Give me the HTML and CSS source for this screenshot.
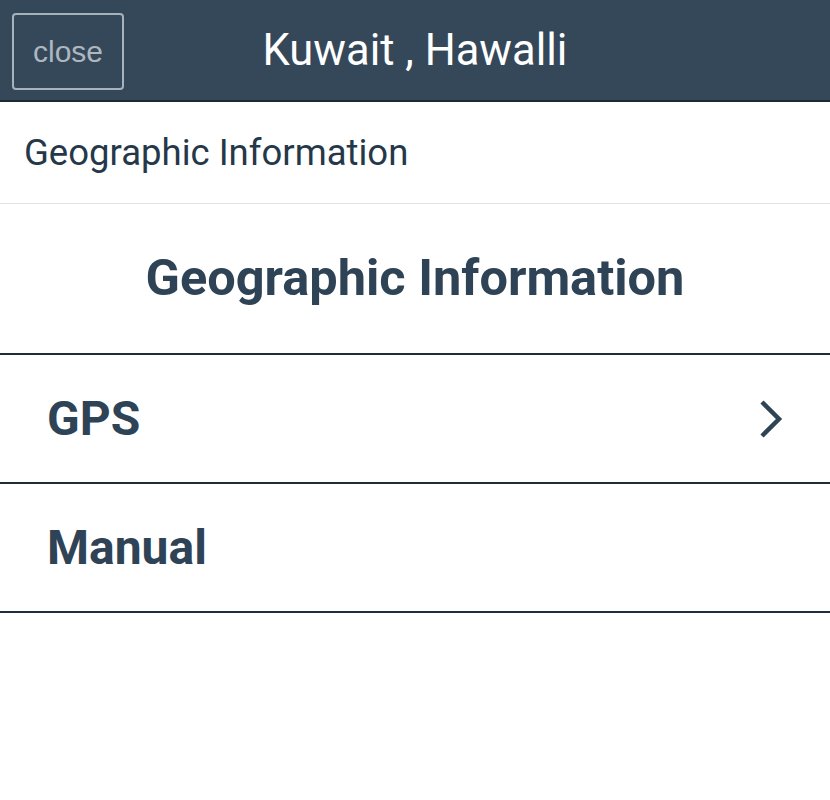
FILE: index.html
```html
<!DOCTYPE html>
<html>
<head>
<meta charset="utf-8">
<link rel="stylesheet" href="styles.css">
</head>
<body>
<header class="topbar">
  <button class="close-btn">close</button>
  <div class="title">Kuwait , Hawalli</div>
</header>
<div class="subbar">Geographic Information</div>
<h1 class="heading">Geographic Information</h1>
<ul class="list">
  <li class="item"><span>GPS</span>
    <svg class="chev" width="30" height="44" viewBox="0 0 30 44"><path d="M6 5 L23 22 L6 39" fill="none" stroke="#2f4356" stroke-width="4.5" stroke-linecap="butt"/></svg>
  </li>
  <li class="item"><span>Manual</span></li>
</ul>
</body>
</html>
```
FILE: styles.css
```css
* { box-sizing: border-box; }
body { margin: 0; font-family: Roboto, "Noto Sans", sans-serif; background: #fff; color: #2f4356; }
.topbar { height: 102px; background: #34485a; border-bottom: 2px solid #1d2a36; display: flex; align-items: center; position: relative; }
.close-btn { position: absolute; left: 12px; top: 13px; width: 112px; height: 77px; background: transparent; border: 2px solid #a8b2bb; border-radius: 4px; color: #aeb7bf; font-family: "Liberation Sans", Arial, sans-serif; font-size: 30px; padding: 0; }
.title { flex: 1; text-align: center; color: #fff; font-size: 43.5px; }
.subbar { height: 102px; border-bottom: 1px solid #e3e3e3; display: flex; align-items: center; padding-left: 24px; font-size: 36.5px; color: #25384a; }
.heading { margin: 0; height: 151px; display: flex; align-items: center; justify-content: center; font-size: 50.5px; font-weight: 700; color: #2f4356; border-bottom: 2px solid #1f2d3a; padding-bottom: 2px; }
.list { list-style: none; margin: 0; padding: 0; }
.item { height: 129px; display: flex; align-items: center; justify-content: space-between; padding: 0 44px 0 47px; font-size: 48px; font-weight: 700; color: #2f4356; border-bottom: 2px solid #1f2d3a; }
.chev { display: block; }
```
